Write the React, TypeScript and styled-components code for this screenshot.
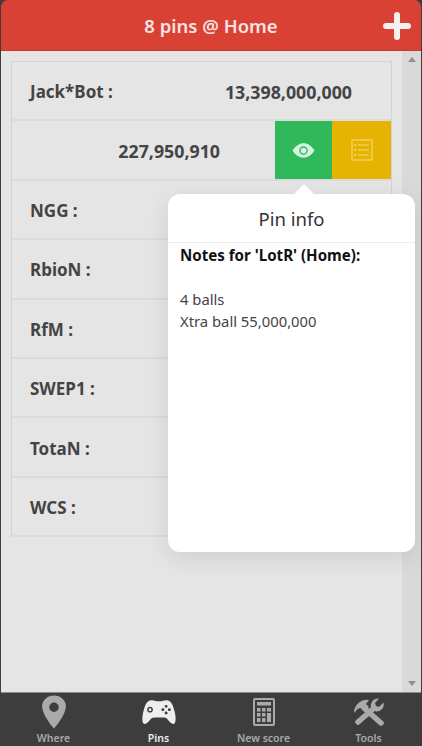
import { ReactNode } from 'react';
import styled, { createGlobalStyle } from 'styled-components';
import { IoLogoGameControllerB as Pad } from 'react-icons/io';
import { IoLocationSharp as Pin, IoEye as Eye } from 'react-icons/io5';

const GlobalStyle = createGlobalStyle`
  html, body {
    margin: 0;
    height: 100%;
    background: #3d3d3d;
    overflow: hidden;
  }
  #root {
    height: 100%;
  }
  * {
    box-sizing: border-box;
  }
`;

const scores = ['NGG', 'RbioN', 'RfM', 'SWEP1', 'TotaN', 'WCS'];

const NotesIcon = () => (
  <svg width="22" height="22" viewBox="0 0 22 22" fill="none" stroke="#f3d878" strokeWidth="1.2">
    <rect x="1" y="1" width="20" height="20" />
    <path d="M7 6h11M7 11h11M7 16h11" />
    <path d="M3.5 6h1.6M3.5 11h1.6M3.5 16h1.6" strokeWidth="1.8" />
  </svg>
);

const PlusIcon = () => (
  <svg width="28" height="28" viewBox="0 0 28 28">
    <path d="M14 3v22M3 14h22" stroke="#f4f0ee" strokeWidth="6" strokeLinecap="round" />
  </svg>
);

const CalculatorIcon = () => (
  <svg width="22" height="28" viewBox="0 0 22 28" fill="currentColor">
    <rect width="22" height="28" rx="2" />
    <rect x="2" y="2" width="18" height="24" fill="#3d3d3d" />
    <rect x="4" y="4" width="14" height="3.5" />
    <path d="M4 10h3.5v3.5H4zM9 10h3.5v3.5H9zM14 10h4v3.5h-4zM4 15h3.5v3.5H4zM9 15h3.5v3.5H9zM14 15h4v9h-4zM4 20h3.5v4H4zM9 20h3.5v4H9z" />
  </svg>
);

const ToolsIcon = () => (
  <svg width="32" height="28" viewBox="0 0 32 28" fill="currentColor">
    <path d="M1 13C3 5 9 1 16 2L13 6l3 3-4 4-3-3C6 10 3 11 2 15Z" />
    <path d="M11 10l17 15" stroke="currentColor" strokeWidth="5.5" strokeLinecap="round" />
    <path d="M26 .5 22 5l1 3 3 1 4.500-4.500C32 10 27 15 21 13l-3-3C17 5 20 0 26 .5Z" />
    <path d="M20 11 5 24" stroke="currentColor" strokeWidth="5.5" strokeLinecap="round" />
  </svg>
);

const Tab = ({ icon, label, active }: { icon: ReactNode; label: string; active?: boolean }) => (
  <TabItem $active={active}>
    <TabIcon>{icon}</TabIcon>
    <TabLabel>{label}</TabLabel>
  </TabItem>
);

const App = () => {
  return (
    <Screen>
      <GlobalStyle />
      <Header>
        <Title>8 pins @ Home</Title>
        <AddButton>
          <PlusIcon />
        </AddButton>
      </Header>
      <Main>
        <Content>
          <ScoreTable>
            <Row>
              <Label>Jack*Bot :</Label>
              <Value>13,398,000,000</Value>
            </Row>
            <Row>
              <SwipedValue>227,950,910</SwipedValue>
              <ActionButton $color="#2fb95a">
                <Eye size={23} color="#d6f3df" />
              </ActionButton>
              <ActionButton $color="#e6b400" $wide>
                <NotesIcon />
              </ActionButton>
            </Row>
            {scores.map((name) => (
              <Row key={name}>
                <Label>{name} :</Label>
              </Row>
            ))}
          </ScoreTable>
        </Content>
        <Scrollbar>
          <ArrowUp />
          <ArrowDown />
        </Scrollbar>
        <Popup>
          <PopupArrow />
          <PopupTitle>Pin info</PopupTitle>
          <PopupBody>
            <NotesHeading>Notes for 'LotR' (Home):</NotesHeading>
            <NotesLine>4 balls</NotesLine>
            <NotesLine>Xtra ball 55,000,000</NotesLine>
          </PopupBody>
        </Popup>
      </Main>
      <Footer>
        <Tab icon={<Pin size={38} />} label="Where" />
        <Tab icon={<Pad size={38} />} label="Pins" active />
        <Tab icon={<CalculatorIcon />} label="New score" />
        <Tab icon={<ToolsIcon />} label="Tools" />
      </Footer>
    </Screen>
  );
};

const Screen = styled.div`
  display: flex;
  flex-direction: column;
  height: 746px;
  padding: 0 1px;
  font-family: 'Noto Sans', 'Open Sans', 'Liberation Sans', sans-serif;
  color: #444;
`;

const Header = styled.header`
  position: relative;
  display: flex;
  align-items: center;
  justify-content: center;
  flex: 0 0 51px;
  border-radius: 7px 7px 0 0;
  border-bottom: 1px solid #c9382d;
  background: #d94135;
`;

const Title = styled.h1`
  margin: 0;
  font-size: 18.5px;
  font-weight: 600;
  color: #f6e3e0;
`;

const AddButton = styled.button`
  position: absolute;
  top: 12px;
  right: 10px;
  display: flex;
  padding: 0;
  border: 0;
  background: none;
`;

const Main = styled.main`
  position: relative;
  display: flex;
  flex: 1;
  min-height: 0;
  background: #e5e5e5;
`;

const Content = styled.div`
  flex: 1;
  padding: 10px 10px 0;
`;

const ScoreTable = styled.div`
  border: 1px solid #d3d3d3;
  border-bottom-width: 0;
`;

const Row = styled.div`
  display: flex;
  align-items: center;
  height: 59.4px;
  border-bottom: 2px solid #dbdbdb;
`;

const Label = styled.span`
  padding: 2px 0 0 18px;
  font-size: 17px;
  font-weight: 700;
  color: #444;
`;

const Value = styled.span`
  margin-left: auto;
  padding: 2px 39px 0 0;
  font-size: 17.8px;
  font-weight: 700;
  color: #444;
`;

const SwipedValue = styled(Value)`
  flex: 1;
  padding-right: 55px;
  text-align: right;
`;

const ActionButton = styled.div<{ $color: string; $wide?: boolean }>`
  display: flex;
  align-items: center;
  justify-content: center;
  flex: 0 0 ${(p) => (p.$wide ? 59 : 57)}px;
  align-self: stretch;
  background: ${(p) => p.$color};
`;

const Scrollbar = styled.div`
  display: flex;
  flex-direction: column;
  align-items: center;
  justify-content: space-between;
  flex: 0 0 19px;
  padding: 6px 0;
  background: #d9d9d9;
`;

const ArrowUp = styled.span`
  border: 4px solid transparent;
  border-top-width: 0;
  border-bottom: 5px solid #8f8f8f;
`;

const ArrowDown = styled.span`
  border: 4px solid transparent;
  border-bottom-width: 0;
  border-top: 5px solid #8f8f8f;
`;

const Popup = styled.div`
  position: absolute;
  top: 143px;
  left: 167px;
  width: 247px;
  height: 358px;
  border-radius: 12px;
  background: #fff;
  box-shadow: 0 6px 24px rgba(0, 0, 0, 0.1);
`;

const PopupArrow = styled.span`
  position: absolute;
  top: -7px;
  left: 129px;
  width: 14px;
  height: 14px;
  background: #fff;
  transform: rotate(45deg);
`;

const PopupTitle = styled.div`
  position: relative;
  padding: 14px 0 13px;
  border-bottom: 1px solid #eee;
  font-size: 18.5px;
  line-height: 21px;
  text-align: center;
  color: #333;
`;

const PopupBody = styled.div`
  padding: 1px 12px;
  font-size: 14.8px;
  line-height: 22px;
  color: #444;
`;

const NotesHeading = styled.div`
  margin-bottom: 22px;
  font-size: 15.1px;
  font-weight: 700;
  color: #111;
`;

const NotesLine = styled.div``;

const Footer = styled.nav`
  display: grid;
  grid-template-columns: repeat(4, 105px);
  flex: 0 0 54px;
  overflow: hidden;
  border-top: 1px solid #8a8a8a;
  background: #3d3d3d;
`;

const TabItem = styled.div<{ $active?: boolean }>`
  display: flex;
  flex-direction: column;
  align-items: center;
  color: ${(p) => (p.$active ? '#eeeeee' : '#aaaaaa')};
`;

const TabIcon = styled.div`
  display: flex;
  align-items: center;
  justify-content: center;
  height: 38px;
`;

const TabLabel = styled.span`
  font-size: 10.5px;
  font-weight: 600;
  line-height: 15px;
`;

export default App;
